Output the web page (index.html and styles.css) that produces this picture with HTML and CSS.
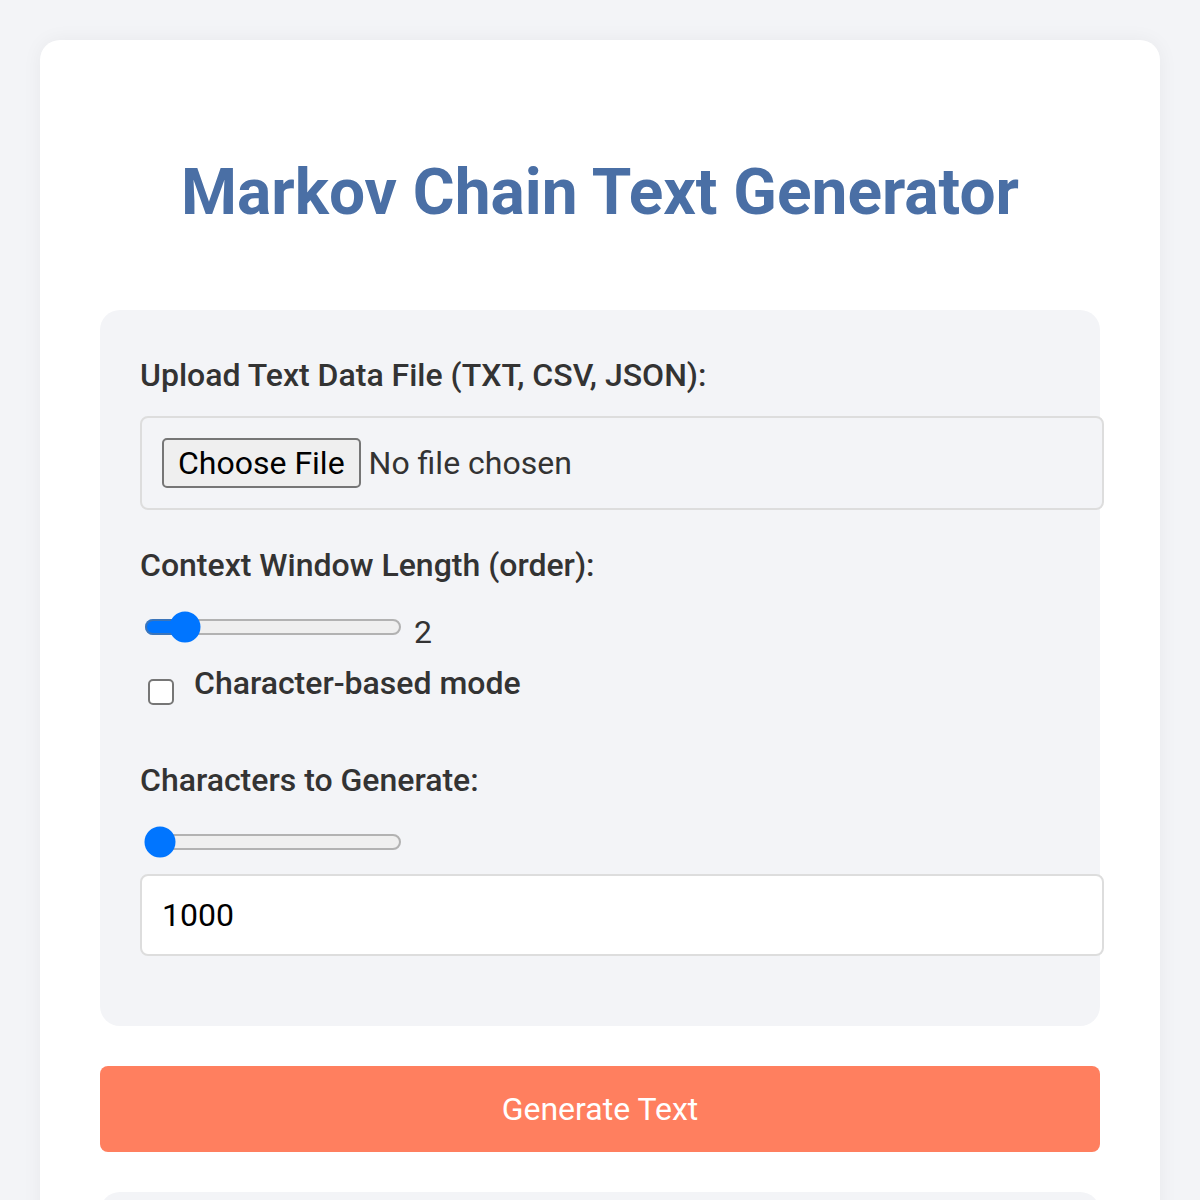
FILE: index.html
```html
<!DOCTYPE html>
<html lang="en">
<head>
    <meta charset="UTF-8">
    <meta name="viewport" content="width=device-width, initial-scale=1.0">
    <title>Markov Chain Text Generator</title>
    <link rel="stylesheet" href="styles.css">
</head>
<body>

    <div class="container">
        <h1>Markov Chain Text Generator</h1>

        <!-- Controls -->
        <div class="controls">
            <label for="fileInput" class="upload-label">Upload Text Data File (TXT, CSV, JSON):</label>
            <input type="file" id="fileInput" accept=".txt,.csv,.json">

            <label for="orderRange">Context Window Length (order):</label>
            <div class="range-row">
                <input type="range" id="orderRange" min="1" max="10" value="2">
                <span id="orderValue">2</span>
            </div>

            <div class="checkbox-row">
                <input type="checkbox" id="charMode">
                <label for="charMode">Character-based mode</label>
            </div>

            <label for="lengthRange">Characters to Generate:</label>
            <input type="range" id="lengthRange" min="1000" max="100000" value="1000">
            <input type="number" id="lengthInput" value="1000">
        </div>

        <button class="generate-btn">Generate Text</button>

        <div class="output" id="output"></div>
    </div>

</body>
</html>
```

FILE: styles.css
```css
html {
    zoom: 2;
}
body {
    background-color: #f3f4f7;
    font-family: Roboto, "Noto Sans", Arial, sans-serif;
    line-height: 1.6;
    color: #333;
    margin: 0;
}
.container {
    max-width: 800px;
    margin: 20px;
    padding: 30px;
    background-color: #fff;
    border-radius: 10px;
    box-shadow: 0 0 10px rgba(0, 0, 0, 0.05);
}
h1 {
    color: #4a6fa5;
    text-align: center;
    margin: 21px 0 33px;
}

/* Controls panel */
.controls {
    background-color: #f3f4f7;
    padding: 20px;
    border-radius: 10px;
}
label {
    display: block;
    margin-bottom: 8px;
    font-weight: 500;
}
.upload-label {
    margin-bottom: 7px;
}
input[type="file"],
input[type="number"] {
    display: block;
    width: 100%;
    padding: 10px;
    border: 1px solid #ddd;
    border-radius: 4px;
    font-size: 16px;
    font-family: inherit;
    margin-bottom: 15px;
}
input[type="file"] {
    background-color: #f3f4f7;
    color: #333;
}
input[type="file"]::file-selector-button {
    font-size: 16px;
    font-family: inherit;
}
input[type="number"] {
    background-color: #fff;
}
.checkbox-row {
    display: flex;
    align-items: center;
    margin-bottom: 15px;
}
.checkbox-row input {
    margin-right: 10px;
}

.generate-btn {
    display: block;
    width: 100%;
    margin: 20px 0;
    padding: 12px;
    font-size: 16px;
    font-family: inherit;
    background-color: #ff7f5f;
    color: white;
    border: none;
    border-radius: 4px;
    cursor: pointer;
}
.output {
    background-color: #f3f4f7;
    border-radius: 10px;
    min-height: 200px;
}
```
